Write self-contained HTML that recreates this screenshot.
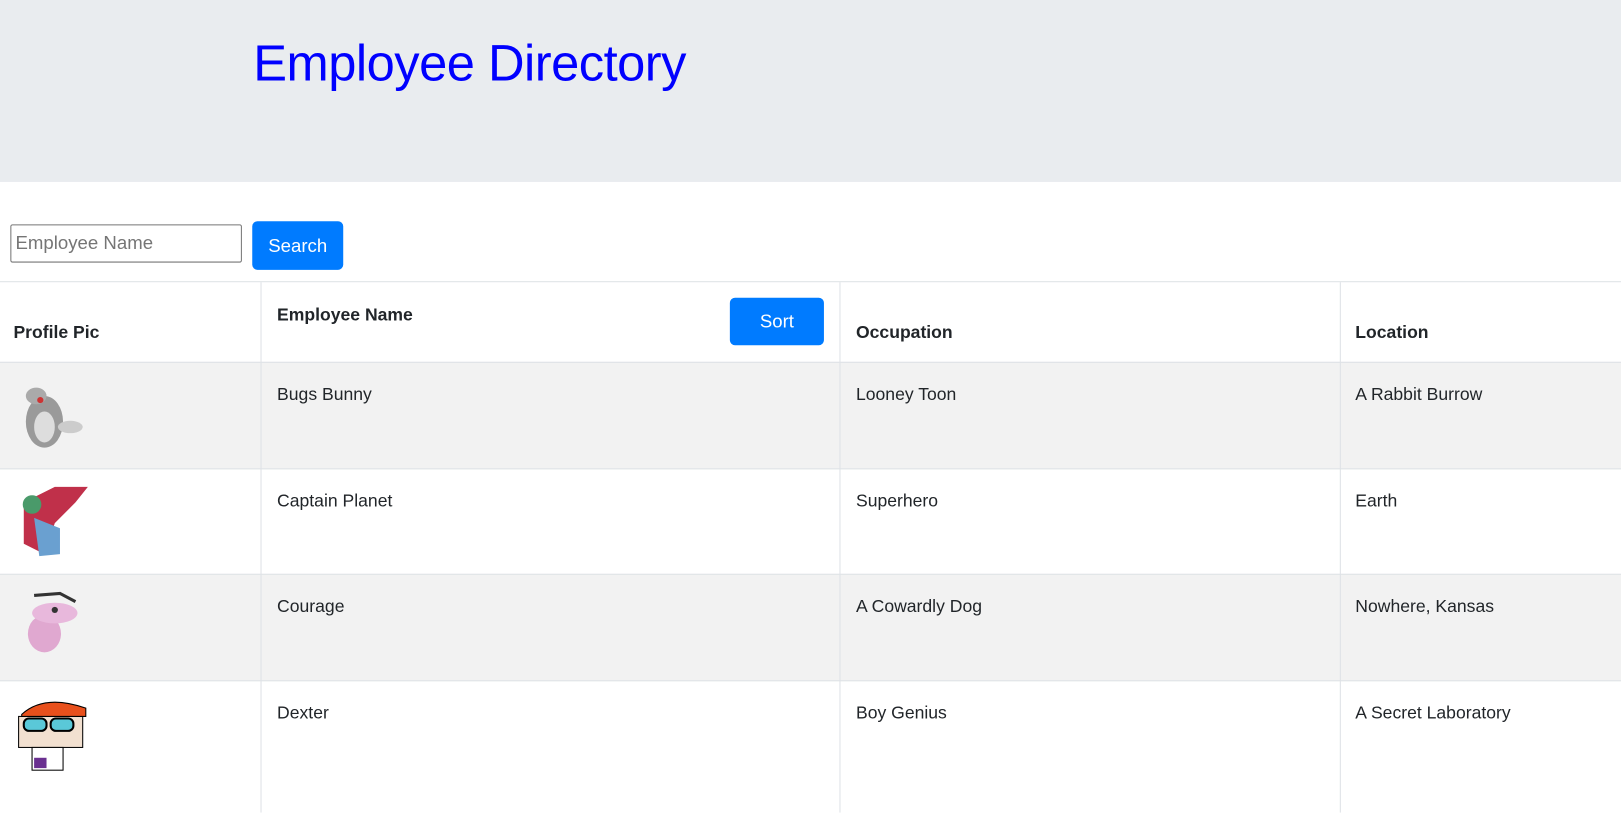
<!DOCTYPE html>
<html><head><style>
body{margin:0;width:1621px;height:786px;overflow:hidden;font-family:"Liberation Sans",sans-serif;color:#212529;background:#fff;position:relative}
#w{position:absolute;left:0;top:0;width:1568px;height:761px;transform:scale(1.03380);transform-origin:0 0}
.hdr{position:absolute;left:0;top:0;width:1568px;height:176px;background:#e9ecef}
.hdr h1{position:absolute;left:245px;top:34px;margin:0;font-weight:400;font-size:49px;color:#0000ff;letter-spacing:-0.5px}
.inp{position:absolute;left:10px;top:217px;border:1px solid #767676;border-radius:2px;font-size:18px;color:#757575;line-height:35px;padding-left:4px;box-sizing:border-box;width:224px;height:37px}
.btn{position:absolute;background:#007bff;color:#fff;border-radius:5px;font-size:18px;text-align:center}
.row{position:absolute;left:0;width:1568px;border-top:1px solid #dee2e6}
.vl{position:absolute;top:273px;height:513px;width:1px;background:#dee2e6}
.t{position:absolute;font-size:17px}
.b{font-weight:bold}
</style></head><body><div id="w">
<div class="hdr"><h1>Employee Directory</h1></div>
<div class="inp">Employee Name</div>
<div class="btn" style="left:244px;top:214px;width:88px;height:47px;line-height:49px">Search</div>
<div class="row" style="top:272px;height:77px;border-bottom:2px solid #dee2e6"></div>
<div class="row" style="top:350px;height:103px;background:#f2f2f2"></div>
<div class="row" style="top:453px;height:102px"></div>
<div class="row" style="top:555px;height:103px;background:#f2f2f2"></div>
<div class="row" style="top:658px;height:128px"></div>
<div class="vl" style="left:252px"></div>
<div class="vl" style="left:812px"></div>
<div class="vl" style="left:1296px"></div>
<div class="t b" style="left:13px;top:312px">Profile Pic</div>
<div class="t b" style="left:268px;top:295px">Employee Name</div>
<div class="btn" style="left:706px;top:288px;width:91px;height:46px;line-height:46px">Sort</div>
<div class="t b" style="left:828px;top:312px">Occupation</div>
<div class="t b" style="left:1311px;top:312px">Location</div>

<div class="t" style="left:268px;top:372px">Bugs Bunny</div>
<div class="t" style="left:828px;top:372px">Looney Toon</div>
<div class="t" style="left:1311px;top:372px">A Rabbit Burrow</div>
<div class="t" style="left:268px;top:475px">Captain Planet</div>
<div class="t" style="left:828px;top:475px">Superhero</div>
<div class="t" style="left:1311px;top:475px">Earth</div>
<div class="t" style="left:268px;top:577px">Courage</div>
<div class="t" style="left:828px;top:577px">A Cowardly Dog</div>
<div class="t" style="left:1311px;top:577px">Nowhere, Kansas</div>
<div class="t" style="left:268px;top:680px">Dexter</div>
<div class="t" style="left:828px;top:680px">Boy Genius</div>
<div class="t" style="left:1311px;top:680px">A Secret Laboratory</div>

<svg style="position:absolute;left:13px;top:363px" width="74" height="76"><ellipse cx="30" cy="45" rx="18" ry="25" fill="#9a9a9a"/><ellipse cx="30" cy="50" rx="10" ry="15" fill="#ddd"/><ellipse cx="22" cy="20" rx="10" ry="8" fill="#aaa"/><circle cx="26" cy="24" r="3" fill="#c33"/><ellipse cx="55" cy="50" rx="12" ry="6" fill="#ccc"/></svg>
<svg style="position:absolute;left:13px;top:466px" width="74" height="76"><path d="M10 20 L40 5 L72 5 L60 20 L40 40 L30 70 L10 60 Z" fill="#c0304a"/><circle cx="18" cy="22" r="9" fill="#4a9a6a"/><path d="M20 35 L45 45 L45 70 L25 72Z" fill="#6aa0d0"/></svg>
<svg style="position:absolute;left:13px;top:568px" width="74" height="76"><ellipse cx="30" cy="45" rx="16" ry="18" fill="#e0a8d0"/><ellipse cx="40" cy="25" rx="22" ry="10" fill="#e8b8dc"/><path d="M20 8 L45 6 L60 14" stroke="#333" stroke-width="3" fill="none"/><circle cx="40" cy="22" r="3" fill="#333"/></svg>
<svg style="position:absolute;left:13px;top:671px" width="74" height="76"><rect x="5" y="22" width="62" height="30" fill="#f2e0d0" stroke="#000"/><path d="M8 20 Q30 0 70 14 L70 22 L8 22Z" fill="#e8501c" stroke="#000"/><rect x="10" y="24" width="22" height="12" rx="5" fill="#5ac8d8" stroke="#000" stroke-width="2"/><rect x="36" y="24" width="22" height="12" rx="5" fill="#5ac8d8" stroke="#000" stroke-width="2"/><rect x="18" y="52" width="30" height="22" fill="#fff" stroke="#000"/><rect x="20" y="62" width="12" height="10" fill="#6a3090"/></svg>
</div></body></html>
